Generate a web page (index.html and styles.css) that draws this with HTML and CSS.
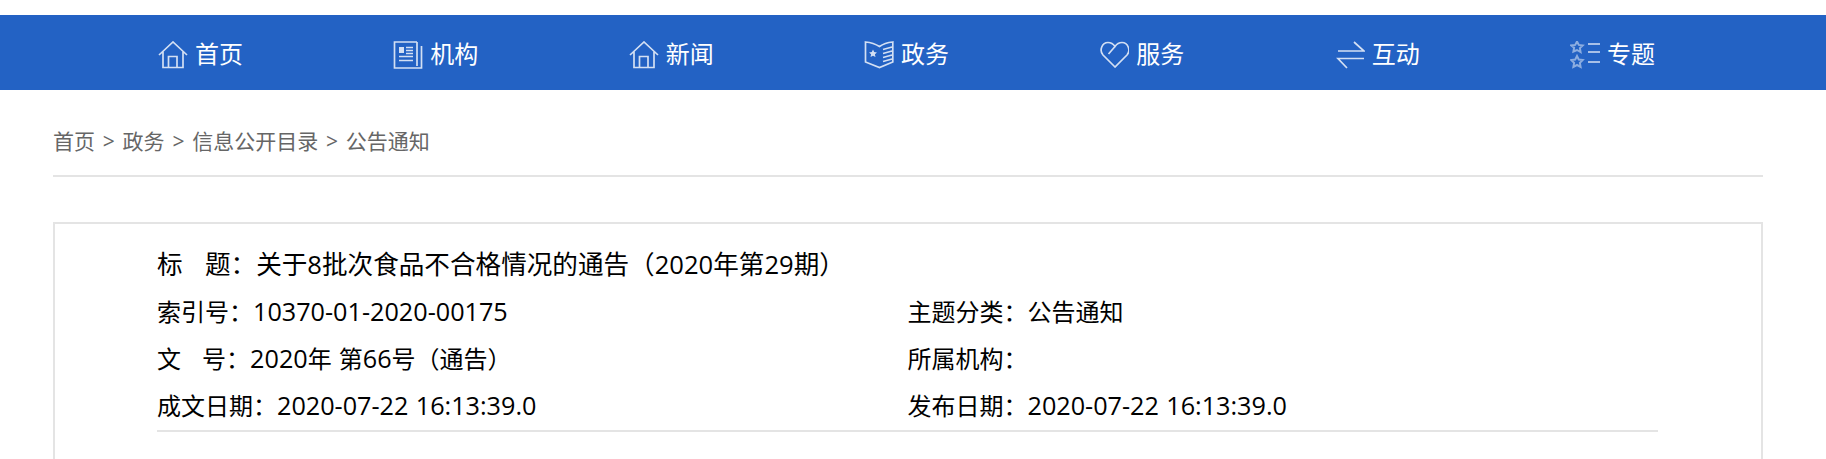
FILE: index.html
```html
<!DOCTYPE html>
<html lang="zh-CN">
<head>
  <meta charset="UTF-8">
  <meta name="viewport" content="width=device-width, initial-scale=1.0">
  <title>公告通知</title>
  <link rel="stylesheet" href="styles.css">
</head>
<body>
  <nav class="nav">
    <a class="nav-item" href="#">
      <svg class="nav-icon" viewBox="0 0 30 28"><path d="M1 14 15 1l14 13M5 10.500V26.500h20V10.500M10.500 26.500V15.500h8.500v11"/></svg>
      <span>首页</span>
    </a>
    <a class="nav-item" href="#">
      <svg class="nav-icon" viewBox="0 0 30 28"><path d="M24 1H1.500v26h27V5M24 1v24M6 15.500h14M6 19.500h14M13 6.500h7M13 9.500h7M13 12.500h7"/><path class="fill" d="M6 6h5v6H6z"/></svg>
      <span>机构</span>
    </a>
    <a class="nav-item" href="#">
      <svg class="nav-icon" viewBox="0 0 30 28"><path d="M1 14 15 1l14 13M5 10.500V26.500h20V10.500M10.500 26.500V15.500h8.500v11"/></svg>
      <span>新闻</span>
    </a>
    <a class="nav-item" href="#">
      <svg class="nav-icon" viewBox="0 0 30 28"><path d="M1.500 1c5 .5 10 2 14 4.500C19 3 24 1.500 28.800 1v20L15.500 26.500 1.500 21zM19 8.500l9-2.500M19 12.500l9-2.500M19 16.500l9-2.500M19 20.500l9-2.500"/><path class="fill" d="m9 8.500 1.200 2.600 2.800.3-2.100 1.900.6 2.800L9 14.700l-2.500 1.400.6-2.800L5 11.400l2.800-.3z"/></svg>
      <span>政务</span>
    </a>
    <a class="nav-item" href="#">
      <svg class="nav-icon" viewBox="0 0 30 28"><path d="M16 26 4 14C0 9.500 3 1.500 9 1.500c3 0 5 1 7 4 2-3 4-4 7-4 6 0 9 8 5 12.500zM9.500 13 16 5.500"/></svg>
      <span>服务</span>
    </a>
    <a class="nav-item" href="#">
      <svg class="nav-icon" viewBox="0 0 30 28"><path d="M3 10h26L19 1M29 17.500H3l9 9.500"/></svg>
      <span>互动</span>
    </a>
    <a class="nav-item" href="#">
      <svg class="nav-icon" viewBox="0 0 30 28"><path class="star" d="m7 .5 1.800 3.400 3.900.5-2.800 2.700.7 3.900L7 9l-3.600 1.500.7-3.900L1.300 4.400l3.900-.5zM7 15l1.800 3.600 3.900.5-2.800 2.800.7 4L7 24l-3.600 1.900.7-4-2.800-2.800 3.900-.5z"/><path d="M18 3h12M18 11h12M18 21h12"/></svg>
      <span>专题</span>
    </a>
  </nav>

  <div class="crumbs">
    <span>首页</span><span class="sep">&gt;</span><span>政务</span><span class="sep">&gt;</span><span>信息公开目录</span><span class="sep">&gt;</span><span>公告通知</span>
  </div>

  <div class="card">
    <div class="info">
      <p class="title">标&nbsp;&nbsp;&nbsp;题：关于<span class="num">8</span>批次食品不合格情况的通告（<span class="num">2020</span>年第<span class="num">29</span>期）</p>
      <p>索引号：<span class="num">10370-01-2020-00175</span></p>
      <p>主题分类：公告通知</p>
      <p>文&nbsp;&nbsp;&nbsp;号：<span class="num">2020</span>年 第<span class="num">66</span>号（通告）</p>
      <p>所属机构：</p>
      <p>成文日期：<span class="num">2020-07-22 16:13:39.0</span></p>
      <p>发布日期：<span class="num">2020-07-22 16:13:39.0</span></p>
    </div>
  </div>
</body>
</html>
```

FILE: styles.css
```css
body {
  margin: 0;
  background: white;
  color: black;
  font-family: "Open Sans", "Noto Sans CJK SC", sans-serif;
}

.nav {
  display: grid;
  grid-template-columns: repeat(7, 235.33px);
  height: 75px;
  margin-top: 15px;
  padding-left: 158px;
  background: #2362c4;
}

.nav-item {
  display: flex;
  align-items: center;
  gap: 7px;
  color: white;
  font-size: 24px;
  text-decoration: none;
}

.nav-icon {
  width: 30px;
  height: 28px;
  margin-top: 5px;
  fill: none;
  stroke: white;
  stroke-width: 1.7;
  opacity: 0.8;
}

.nav-icon .fill {
  fill: white;
  stroke: none;
}

.nav-icon .star {
  stroke-width: 2;
  opacity: 0.6;
}

.crumbs {
  display: flex;
  margin: 0 63px 0 53px;
  padding: 34px 0 17px;
  border-bottom: 2px solid #e4e4e4;
  color: #666;
  font-size: 21px;
  line-height: 34px;
}

.sep {
  margin: 0 7.800px;
}

.card {
  min-height: 220px;
  margin: 45px 63px 0 53px;
  padding: 17px 103px 0 102px;
  border: 2px solid #e4e4e4;
  border-bottom: 0;
}

.info {
  display: grid;
  grid-template-columns: 1fr 1fr;
  grid-auto-rows: 47px;
  padding-bottom: 1px;
  border-bottom: 2px solid #e4e4e4;
  font-size: 24px;
  word-spacing: 0.8px;
}

.info p {
  margin: 0;
  line-height: 47px;
}

.info .title {
  grid-column: span 2;
  font-size: 25.600px;
}

.num {
  font-size: 25.200px;
}

.title .num {
  font-size: 25.600px;
}
```
